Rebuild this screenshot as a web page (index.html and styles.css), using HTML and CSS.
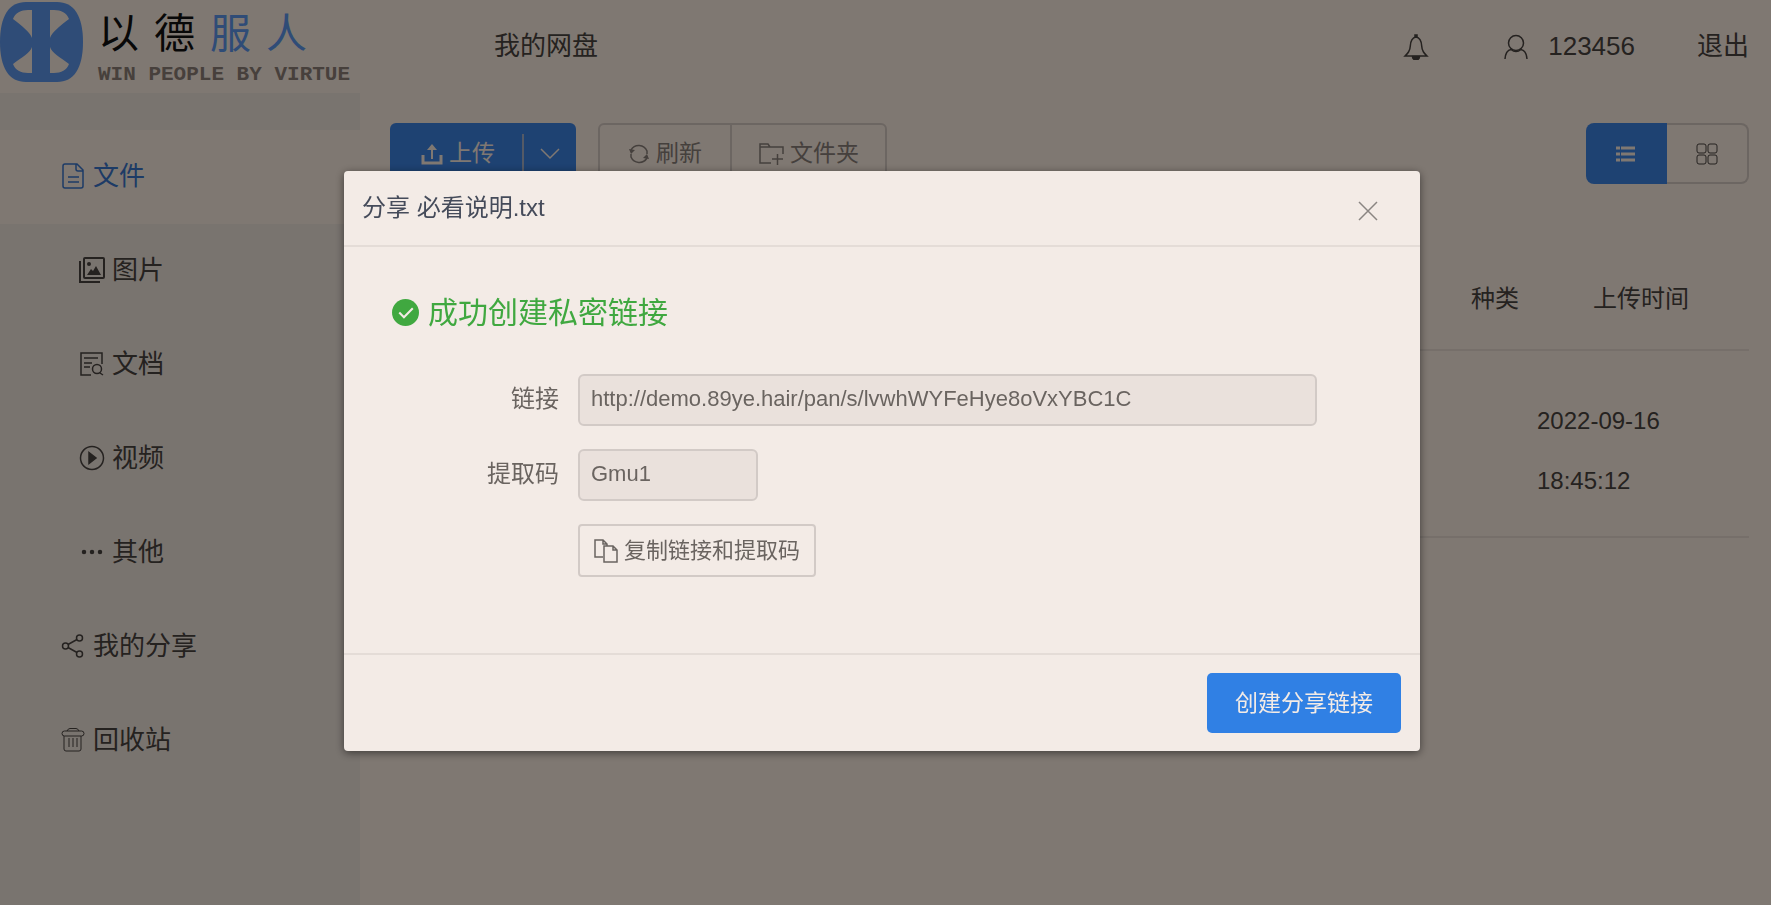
FILE: index.html
```
<!DOCTYPE html>
<html lang="zh-CN">
<head>
  <meta charset="UTF-8">
  <meta name="viewport" content="width=device-width, initial-scale=1.0">
  <title>我的网盘</title>
  <link rel="stylesheet" href="styles.css">
</head>
<body>
  <header class="header">
    <a class="logo" href="#" aria-label="以德服人">
      <svg class="logo-mark" viewBox="0 0 83 80">
        <path class="logo-bg" d="M26 0H57C74 0 83 14 83 40S74 80 57 80H26C9 80 0 66 0 40S9 0 26 0Z" />
        <path class="logo-cut" d="M32 8V36C30 30 22 24 13 17C15 11 21 8 28 8ZM50 8V36C52 30 60 24 69 17C67 11 61 8 54 8ZM32 71V45C30 51 22 55 13 62C15 68 21 71 28 71ZM50 71V45C52 51 60 55 69 62C67 68 61 71 54 71Z" />
      </svg>
      <span class="logo-text">
        <span class="logo-cn"><span>以</span><span>德</span><span class="blue">服</span><span class="blue">人</span></span>
        <span class="logo-en">WIN PEOPLE BY VIRTUE</span>
      </span>
    </a>
    <nav class="top-nav"><a href="#">我的网盘</a></nav>
    <div class="user-bar">
      <a href="#" aria-label="消息">
        <svg class="icon" viewBox="0 0 26 26"><path d="M13 3C8 4 7.500 8 7.300 12C7 17 5 19 2 22H24C21 19 19 17 18.700 12C18.500 8 18 4 13 3Z" /><path class="solid" d="M12 1h2v2h-2zM9.500 22.500h7a3.500 3.500 0 0 1-7 0z" /></svg>
      </a>
      <a class="user" href="#">
        <svg class="icon" viewBox="0 0 26 26"><circle cx="13" cy="9" r="7.500" /><path d="M2 25C2.500 19 5 16 8 15.500C11 18 15 18 18 15.500C21 16 23.500 19 24 25" /></svg>
        123456
      </a>
      <a href="#">退出</a>
    </div>
  </header>

  <div class="layout">
    <aside class="sidebar">
      <a class="item active" href="#">
        <svg class="icon" viewBox="0 0 26 26"><path d="M5 1H17L23 7V23Q23 25 21 25H5Q3 25 3 23V3Q3 1 5 1ZM16 1V6Q16 8 18 8H23M8 14H19M8 19H19" /></svg>
        文件
      </a>
      <a class="item sub" href="#">
        <svg class="icon bold" viewBox="0 0 26 26"><rect x="5" y="1" width="20" height="20" rx="1" /><path d="M1 4V25H21" /><path class="fill" d="M8 18L12 12L14 14L17 9L22 18Z" /><circle class="fill" cx="10" cy="7" r="2" /></svg>
        图片
      </a>
      <a class="item sub" href="#">
        <svg class="icon" viewBox="0 0 26 26"><path d="M12 24H2V2H23V13M5 7H19M5 12H13M5 16H11M21 22L24 24" /><circle cx="18" cy="18" r="4.500" /></svg>
        文档
      </a>
      <a class="item sub" href="#">
        <svg class="icon" viewBox="0 0 26 26"><circle cx="13" cy="13" r="11.500" /><path class="solid" d="M10 7.500L17 13L10 18.500Z" /></svg>
        视频
      </a>
      <a class="item sub" href="#">
        <svg class="icon" viewBox="0 0 26 26"><g class="solid"><circle cx="5" cy="13" r="1.500" /><circle cx="13" cy="13" r="1.500" /><circle cx="21" cy="13" r="1.500" /></g></svg>
        其他
      </a>
      <a class="item" href="#">
        <svg class="icon" viewBox="0 0 26 26"><circle cx="5.500" cy="13" r="3" /><circle cx="19.500" cy="5" r="3" /><circle cx="19.500" cy="21" r="3" /><path d="M8 11.500L17 6.500M8 14.500L17 19.500" /></svg>
        我的分享
      </a>
      <a class="item" href="#">
        <svg class="icon thin" viewBox="0 0 26 26"><path d="M7 4Q8 1.500 10 1.500H16Q18 1.500 19 4M4 9V22Q4 24 6 24H19Q21 24 21 22V9M9 11V20M13 11V20M17 11V20" /><rect x="2" y="4" width="22" height="5" rx="2.500" /></svg>
        回收站
      </a>
    </aside>

    <main class="main">
      <div class="toolbar">
        <div class="upload">
          <button type="button" class="upload-btn">
            <svg class="icon small bold" viewBox="0 0 22 22"><path class="thick" d="M2 12V20H20V12" /><path d="M11 16V4" /><path class="fill" d="M6 7L11 1L16 7Z" /></svg>
            上传
          </button>
          <button type="button" class="upload-more" aria-label="更多">
            <svg class="icon small" viewBox="0 0 22 22"><path d="M2 6L11 15L20 6" /></svg>
          </button>
        </div>
        <div class="group">
          <button type="button">
            <svg class="icon small" viewBox="0 0 22 22"><path d="M3 7A9 9 0 0 1 19 8V11M19 15A9 9 0 0 1 3 14V11" /><path class="fill" d="M1 6L7 7L3 11ZM21 16L15 15L19 11Z" /></svg>
            刷新
          </button>
          <button type="button">
            <svg class="icon" viewBox="0 0 26 26"><path d="M13 22H2V3H10L12 6H25V13M2 6H12M14 18H25M19.500 13V24" /></svg>
            文件夹
          </button>
        </div>
        <div class="view">
          <button type="button" class="on" aria-label="列表">
            <svg class="icon small heavy" viewBox="0 0 22 22"><path d="M1 5H5M6 5H20M1 11H5M6 11H20M1 17H5M6 17H20" /></svg>
          </button>
          <button type="button" class="off" aria-label="网格">
            <svg class="icon small thin" viewBox="0 0 22 22"><rect x="1" y="1" width="9" height="9" rx="2" /><rect x="12" y="1" width="9" height="9" rx="2" /><rect x="1" y="12" width="9" height="9" rx="2" /><rect x="12" y="12" width="9" height="9" rx="2" /></svg>
          </button>
        </div>
      </div>

      <table class="files">
        <thead>
          <tr>
            <th></th>
            <th class="type">种类</th>
            <th class="time">上传时间</th>
          </tr>
        </thead>
        <tbody>
          <tr>
            <td></td>
            <td></td>
            <td>2022-09-16<br>18:45:12</td>
          </tr>
        </tbody>
      </table>
    </main>
  </div>

  <div class="overlay">
    <div class="dialog" role="dialog" aria-labelledby="dialogTitle">
      <div class="dialog-header">
        <h2 id="dialogTitle">分享 必看说明.txt</h2>
        <button type="button" class="close" aria-label="关闭">
          <svg class="icon" viewBox="0 0 26 26"><path d="M4 4L22 22M22 4L4 22" /></svg>
        </button>
      </div>
      <form class="dialog-body" id="shareForm" action="">
        <p class="success">
          <svg class="success-icon" viewBox="0 0 26 26"><circle cx="13" cy="13" r="13" /><path d="M7 13L11.500 17.500L20 9" /></svg>
          成功创建私密链接
        </p>
        <div class="row">
          <label for="link">链接</label>
          <input type="text" id="link" name="link" value="http://demo.89ye.hair/pan/s/lvwhWYFeHye8oVxYBC1C" readonly>
        </div>
        <div class="row">
          <label for="code">提取码</label>
          <input type="text" class="code" id="code" name="code" value="Gmu1" readonly>
        </div>
        <button type="button" class="copy">
          <svg class="icon" viewBox="0 0 26 26"><path d="M10 19H2V2H10L14 6V8M10 2V6H14M11 24V8H20L24 12V24ZM20 8V12H24" /></svg>
          复制链接和提取码
        </button>
      </form>
      <div class="dialog-footer">
        <button type="submit" form="shareForm" class="create">创建分享链接</button>
      </div>
    </div>
  </div>
</body>
</html>
```

FILE: styles.css
```
* {
  box-sizing: border-box;
  margin: 0;
  padding: 0;
  font-family: "Liberation Sans", "Noto Sans CJK SC", sans-serif;
}

body {
  min-height: 100vh;
  display: flex;
  flex-direction: column;
  background-color: #fff0e4;
  color: #4a4440;
  font-size: 26px;
  line-height: 1.5;
}

a {
  color: inherit;
  text-decoration: none;
}

button {
  border: none;
  background: none;
  color: inherit;
  font-size: 23px;
  line-height: 1.5;
  cursor: pointer;
}

.icon {
  flex: none;
  width: 26px;
  height: 26px;
  fill: none;
  stroke: currentColor;
  stroke-width: 1.5;
}

.icon .solid {
  fill: currentColor;
}

.icon .fill {
  fill: currentColor;
  stroke: none;
}

.icon .thick {
  stroke-width: 3;
}

.icon.small {
  width: 22px;
  height: 22px;
}

.icon.bold {
  stroke-width: 2;
}

.icon.thin {
  stroke-width: 1;
}

.icon.heavy {
  stroke-width: 3;
}

/* header */
.header {
  display: flex;
  align-items: center;
  height: 93px;
  padding-right: 22px;
}

.logo {
  display: flex;
  align-self: flex-start;
  gap: 15px;
  width: 360px;
  padding-top: 2px;
}

.logo-mark {
  width: 83px;
  height: 80px;
}

.logo-bg {
  fill: #5e98ee;
}

.logo-cut {
  fill: #fff0e4;
}

.logo-text {
  display: flex;
  flex-direction: column;
  color: #8e8078;
}

.logo-cn {
  display: flex;
  gap: 15px;
  height: 61px;
  line-height: 64px;
  font-size: 41px;
  color: #111;
}

.logo-cn .blue {
  color: #5e98ee;
}

.logo-en {
  line-height: 24px;
  font-family: "Liberation Mono", monospace;
  font-size: 21px;
  font-weight: bold;
}

.top-nav {
  flex: 1;
  padding-left: 134px;
}

.user-bar,
.user-bar a {
  display: flex;
  align-items: center;
}

.user-bar {
  gap: 62px;
}

.user-bar .user {
  gap: 19px;
  margin-left: 12px;
}

/* sidebar */
.layout {
  flex: 1;
  display: flex;
}

.sidebar {
  width: 360px;
  padding-top: 37px;
  background-color: #f3e8df;
}

.item {
  display: flex;
  align-items: center;
  gap: 7px;
  height: 94px;
  padding: 0 0 2px 60px;
}

.item.sub {
  padding-left: 79px;
}

.item.active {
  background-color: #fff0e4;
  color: #3a76cc;
}

/* file list */
.main {
  flex: 1;
  padding: 30px 22px 0 30px;
}

.toolbar {
  display: flex;
  height: 61px;
  margin-bottom: 65px;
}

.toolbar button {
  display: flex;
  align-items: center;
  justify-content: center;
  gap: 6px;
}

.upload {
  display: flex;
  align-items: center;
  width: 186px;
  margin-right: 22px;
  border-radius: 6px;
  background-color: #3c84e4;
  color: #fff0e4;
}

.upload-btn {
  flex: 1;
  height: 40px;
  padding-left: 4px;
  border-right: 2px solid #a8b4cc;
}

.upload-more {
  width: 52px;
}

.group {
  display: flex;
  border: 2px solid #d8ccc4;
  border-radius: 6px;
  color: #8a807a;
}

.group button {
  padding: 0 28px;
}

.group button + button {
  padding: 0 26px;
  border-left: 2px solid #d8ccc4;
}

.view {
  display: flex;
  width: 163px;
  margin-left: auto;
}

.view button {
  flex: 1;
}

.view .on {
  border-radius: 8px 0 0 8px;
  background-color: #3c84e4;
  color: #fff0e4;
}

.view .off {
  border: 2px solid #d8ccc4;
  border-left: none;
  border-radius: 0 8px 8px 0;
}

.files {
  width: 100%;
  border-collapse: collapse;
  font-size: 24px;
}

.files th {
  height: 101px;
  border-bottom: 2px solid #ecdfd5;
  font-weight: normal;
}

.files td {
  padding: 40px 16px 25px;
  border-bottom: 2px solid #ecdfd5;
  line-height: 60px;
}

.files .type {
  width: 52px;
  white-space: nowrap;
}

.files .time {
  width: 228px;
  padding-left: 12px;
}

/* share dialog */
.overlay {
  position: fixed;
  inset: 0;
  display: flex;
  justify-content: center;
  align-items: flex-start;
  padding: 171px 7px 0 0;
  background-color: rgba(0, 0, 0, 0.5);
}

.dialog {
  width: 1076px;
  border-radius: 4px;
  background-color: #f3ebe6;
  box-shadow: 0 2px 8px rgba(0, 0, 0, 0.5);
  color: #6a6460;
  font-size: 24px;
}

.dialog-header {
  display: flex;
  align-items: center;
  justify-content: space-between;
  height: 76px;
  padding: 0 39px 0 18px;
  border-bottom: 2px solid #e4dcd7;
}

.dialog-header h2 {
  font-size: 24px;
  font-weight: normal;
  color: #454b5a;
}

.close {
  display: flex;
  padding-top: 6px;
  color: #8a8582;
}

.dialog-body {
  padding: 39px 103px 76px 48px;
}

.success {
  display: flex;
  align-items: center;
  gap: 9px;
  height: 52px;
  margin-bottom: 36px;
  font-size: 30px;
  color: #40a840;
}

.success-icon {
  width: 27px;
  height: 27px;
  fill: #40a840;
}

.success-icon path {
  fill: none;
  stroke: #f3ebe6;
  stroke-width: 2;
}

.row {
  display: flex;
  margin-bottom: 23px;
}

.row label {
  width: 167px;
  margin-right: 19px;
  line-height: 50px;
  text-align: right;
}

.row input {
  flex: 1;
  height: 52px;
  padding: 0 11px 2px;
  border: 2px solid #d2cac6;
  border-radius: 6px;
  background-color: #eae1dc;
  color: #6a6460;
  font-size: 22px;
}

.row .code {
  flex: none;
  width: 180px;
}

.copy {
  display: flex;
  align-items: center;
  gap: 5px;
  height: 53px;
  margin-left: 186px;
  padding: 0 14px 0 13px;
  border: 2px solid #d2cac6;
  border-radius: 4px;
  font-size: 22px;
}

.dialog-footer {
  display: flex;
  justify-content: flex-end;
  padding: 18px 19px;
  border-top: 2px solid #e4dcd7;
}

.create {
  height: 60px;
  padding: 0 28px;
  border-radius: 5px;
  background-color: #3080e4;
  color: #f3ebe6;
}
```
